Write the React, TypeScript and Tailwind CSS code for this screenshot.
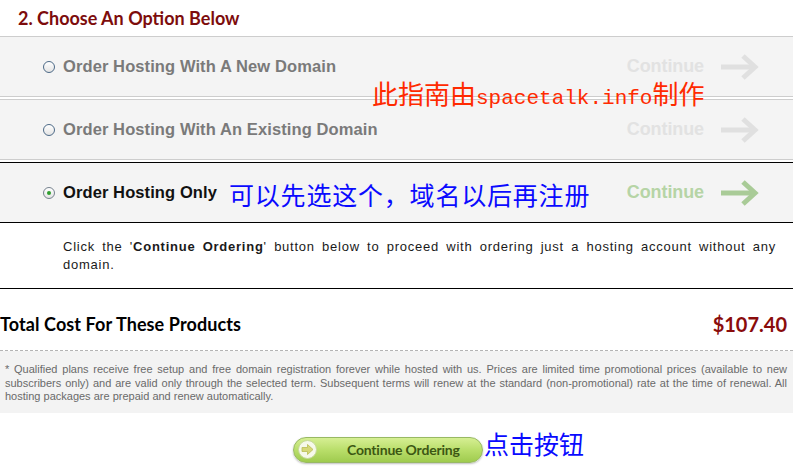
import React from "react";

const Arrow = ({ color }: { color: string }) => (
  <svg width="40" height="28" viewBox="0 0 40 28" className="block">
    <line x1="1" y1="14" x2="34" y2="14" stroke={color} strokeWidth="5" strokeLinecap="butt" />
    <polyline points="23,3 35,14 23,25" fill="none" stroke={color} strokeWidth="5" strokeLinejoin="miter" strokeLinecap="butt" />
  </svg>
);

const Radio = ({ checked }: { checked?: boolean }) => (
  <span
    className={
      "flex h-[12px] w-[12px] shrink-0 items-center justify-center rounded-full border bg-gradient-to-b from-white to-[#e4e4e4] " +
      (checked ? "border-[#76828e]" : "border-[#4d6a87]")
    }
  >
    {checked && <span className="h-[4px] w-[4px] rounded-full bg-[#2f9e2f]" />}
  </span>
);

const OptionRow = ({
  label,
  active,
}: {
  label: string;
  active?: boolean;
}) => (
  <div
    className={
      "flex h-[61px] items-center border-y bg-[#f4f4f4] pl-[43px] pr-[33px] " +
      (active ? "border-black" : "border-[#cdcdcd]")
    }
  >
    <Radio checked={active} />
    <span
      className={
        "ml-[8px] text-[16.5px] font-bold tracking-[0.1px] " + (active ? "text-[#111]" : "text-[#7a7a7a]")
      }
    >
      {label}
    </span>
    <div className="ml-auto flex items-center gap-[16px]">
      <span
        className={
          "text-[18px] font-bold tracking-[-0.1px] " + (active ? "text-[#b6d4a6]" : "text-[#e2e2e2]")
        }
      >
        Continue
      </span>
      <Arrow color={active ? "#a9cb97" : "#e0e0e0"} />
    </div>
  </div>
);

export default function App() {
  return (
    <div className="relative h-[475px] w-[793px] overflow-hidden bg-white font-['Liberation_Sans',Arial,sans-serif]">
      <div className="flex h-[36px] items-center pl-[18px]">
        <h2 className="font-['Lato',sans-serif] text-[18px] font-bold text-[#7d0c0c]">
          2. Choose An Option Below
        </h2>
      </div>

      <div className="flex flex-col gap-[2px]">
        <OptionRow label="Order Hosting With A New Domain" />
        <OptionRow label="Order Hosting With An Existing Domain" />
        <OptionRow label="Order Hosting Only" active />
      </div>

      <p className="border-b border-black pb-[14px] pl-[63px] pr-[17px] pt-[15px] text-justify text-[13px] leading-[18px] tracking-[0.75px] text-[#1a1a1a]">
        Click the '<b>Continue Ordering</b>' button below to proceed with ordering just a hosting account without any domain.
      </p>

      <div className="flex items-center justify-between border-b border-dashed border-[#b4b4b4] pb-[14px] pr-[6px] pt-[23px] font-['Lato',sans-serif] font-bold leading-[24px]">
        <span className="text-[18px] tracking-[0.1px] text-black">Total Cost For These Products</span>
        <span className="text-[20px] text-[#8a0c0c]">$107.40</span>
      </div>

      <div className="bg-[#f3f3f3] pb-[9px] pl-[5px] pr-[6px] pt-[12px] text-justify text-[11px] leading-[13.5px] text-[#6a6a6a]">
        * Qualified plans receive free setup and free domain registration forever while hosted with us. Prices are limited time promotional prices (available to new subscribers only) and are valid only through the selected term. Subsequent terms will renew at the standard (non-promotional) rate at the time of renewal. All hosting packages are prepaid and renew automatically.
      </div>

      <div className="pl-[293px] pt-[24px]">
        <button className="flex h-[26px] w-[190px] items-center rounded-full border border-[#98b963] bg-gradient-to-b from-[#d6ef93] via-[#b9de6a] to-[#9fcb4e] pl-[4px] shadow-[0_1px_2px_rgba(0,0,0,0.25)]">
          <span className="flex h-[19px] w-[19px] items-center justify-center rounded-full border border-[#c7d99a] bg-[#f6f9ea]">
            <svg width="13" height="11" viewBox="0 0 13 11">
              <path d="M1 3.5 H6.5 V0.5 L12 5.5 L6.5 10.5 V7.5 H1 Z" fill="#d6d877" stroke="#b9bd55" strokeWidth="0.8" />
            </svg>
          </span>
          <span className="ml-[30px] font-['Lato',sans-serif] text-[14px] font-bold tracking-[-0.2px] text-[#3c5713]">
            Continue Ordering
          </span>
        </button>
      </div>

      <div className="absolute left-[372px] top-[80px] whitespace-nowrap font-['Noto_Sans_CJK_SC',sans-serif] text-[26px] leading-[26px] text-[#ff2a00]">
        此指南由<span className="font-['Liberation_Mono',monospace] text-[21px]">spacetalk.info</span>制作
      </div>
      <div className="absolute left-[229px] top-[182px] whitespace-nowrap font-['Noto_Sans_CJK_SC',sans-serif] text-[25px] leading-[25px] tracking-[0.8px] text-[#0a0aff]">
        可以先选这个，域名以后再注册
      </div>
      <div className="absolute left-[484px] top-[431px] whitespace-nowrap font-['Noto_Sans_CJK_SC',sans-serif] text-[25px] leading-[25px] text-[#0a0aff]">
        点击按钮
      </div>
    </div>
  );
}
